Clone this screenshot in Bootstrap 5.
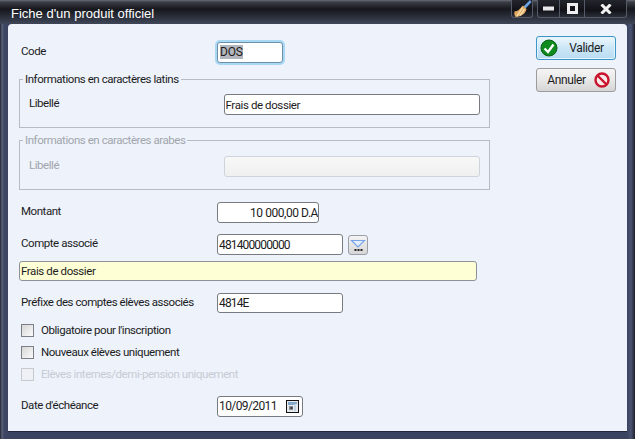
<!DOCTYPE html>
<html lang="fr">
<head>
<meta charset="utf-8">
<title>Fiche d'un produit officiel</title>
<link href="https://cdn.jsdelivr.net/npm/bootstrap@5.3.0/dist/css/bootstrap.min.css" rel="stylesheet">
<style>
html,body{margin:0;padding:0;background:#3c4560;overflow:hidden}
body{font-family:Roboto,"Liberation Sans",Arial,sans-serif;font-size:11.5px;letter-spacing:-.45px;color:#1c1c1c;line-height:14px}
.win{width:635px;height:439px;background:linear-gradient(90deg,#20242f 0,#59617a 2px,#3d4763 4px,#3a4360 8px,#3a4360 627px,#4a5371 631px,#1e222c 635px)}
.tbar{height:24px;background:linear-gradient(180deg,#6b6f79 0,#3c3e46 2px,#17181e 9px,#23262f 14px,#3f4658 24px)}
.tbar-title{color:#fff;font-family:"Liberation Sans",Arial,sans-serif;font-size:13px;letter-spacing:0;padding:6px 0 0 11px;line-height:16px}
.wbtns{padding-right:8px;height:18px}
.wb{height:18px;border:1px solid #555a68;border-top:0;background:linear-gradient(180deg,#23252c,#111218 60%,#2b2e38);color:#fff}
.wb-brush{width:22px;border-radius:0 0 3px 3px;margin-right:4px}
.wb-min{width:23px;border-radius:0 0 0 3px}
.wb-max{width:25px;border-left:0}
.wb-close{width:42px;border-left:0;border-radius:0 0 3px 0}
.client{width:619px;height:408px;margin-left:8px;background:#edf2fb;border-radius:4px 4px 0 0;border-bottom:1px solid #23283a}
.fcol{width:483px;padding:18px 0 0 11px}
.scol{width:91px;margin-left:auto;padding:12px 11px 0 0}
.frow{height:21px}
.frow-s{height:20px}
.frow-l{padding-left:2px}
.flab{width:196px;padding-bottom:3px}
.fld.form-control{height:21px;min-height:0;border:1px solid #777b80;border-radius:3px;padding:0 2px 0 1px;font-size:11.5px;letter-spacing:-.4px;line-height:19px;color:#1c1c1c;background:#fff;box-shadow:none;font-family:inherit}
.frow-s .fld.form-control{height:20px;line-height:18px}
.fld.fnum.form-control{font-size:12px;letter-spacing:-.85px}
.fld.w-mont.form-control{font-size:12px;letter-spacing:-.45px;text-align:right;padding-right:0}
.fld.fld-focus.form-control{padding-left:2px;border-color:#6e8fa8;box-shadow:0 0 0 2px #a8d8f4;font-size:12px;letter-spacing:-.25px}
.w-code{width:66px}
.w-mont{width:102px}
.w-comp{width:126px}
.w-lib{width:257px}
.sel{background:#b4b6bd}
.fld-dis.form-control{background:linear-gradient(180deg,#f8f8f8,#efefef);border-color:#cfd3da}
.fld-yellow.form-control{width:458px;height:20px;line-height:18px;background:#ffffd5;border-color:#8e9298;display:block}
.gbox{margin:0;border:1px solid #b8bcc2;width:471px;padding:0 9px 12px 9px;min-width:0}
.gbox legend{float:none;width:auto;font-size:11.5px;line-height:14px;margin:0 0 0 -6px;padding:0 2px;color:#1c1c1c}
.gbox-1{margin-top:9px;padding-top:8px}
.gbox-2{margin-top:5px;padding-top:9px;color:#a2a6ac}
.gbox-2 legend{color:#a2a6ac}
.gbox .flab{width:195px}
.m12{margin-top:12px}.m11{margin-top:11px}.m6{margin-top:6px}.m10{margin-top:10px}.m9{margin-top:9px}.m15{margin-top:15px}
.sqbtn{width:20px;height:20px;margin-left:5px;padding:0;border:1px solid #9a9ea6;border-radius:3px;background:linear-gradient(180deg,#f4f4f4,#d6d6d6)}
.sqbtn svg{display:block;margin:0 auto}
.date-wrap{width:86px;height:21px;border:1px solid #777b80;border-radius:3px;background:#fff;font-size:12px;letter-spacing:-.6px;line-height:19px;padding:0 3px 0 1px}
.date-ico{display:block;width:13px;height:13px}
.chk{height:13px;padding-left:2px}
.chk .form-check-input{width:13px;height:13px;margin:0 6px 0 0;border:1px solid #7c8086;border-radius:0;background:linear-gradient(135deg,#d6d6d6,#fbfbfb);float:none;opacity:1;flex:none}
.chk .form-check-label{opacity:1;color:#1c1c1c;padding:0 0 2px 1px}
.chk-dis .form-check-input{border-color:#c6c9ce;background:#eef0f5}
.chk-dis .form-check-label{color:#a2a6ac}
.abtn.btn{width:80px;height:24px;padding:0 0 0 3px;font-size:12px;letter-spacing:-.35px;line-height:22px;color:#1c1c1c;border-radius:3px;display:flex;align-items:center}
.abtn-ok.btn{background:linear-gradient(180deg,#eef7fd,#cbe6f6 50%,#b9dcf2);border:1px solid #3d95c8;box-shadow:inset 0 0 0 1px #e5f4fc}
.abtn-no.btn{background:linear-gradient(180deg,#f5f5f5,#e8e8e8 50%,#d5d5d5);border:1px solid #9c9c9c;margin-top:8px}
.abtn-txt{flex:1;text-align:center}
</style>
</head>
<body>
<div class="win d-flex flex-column">
  <div class="tbar d-flex justify-content-between align-items-start">
    <div class="tbar-title">Fiche d'un produit officiel</div>
    <div class="wbtns d-flex">
      <div class="wb wb-brush d-flex align-items-center justify-content-center">
        <svg width="19" height="17" viewBox="0 0 19 17"><path d="M17 0 L10.5 6.5 L12.5 8.5 L18.5 2Z" fill="#6ba3e4"/><path d="M10 5.5 L13.5 9 C13 13 9 16.5 2.5 17 C1.5 15 1 13.5 1.5 11.5 C5 11.5 7 8.5 10 5.5Z" fill="#e3ab62"/><path d="M9.5 7.5 C8 10 6.5 13 4 16 M11.5 9 C10.5 11 9 13.5 7 15.5" stroke="#f8e2b4" stroke-width="1.3" fill="none"/></svg>
      </div>
      <div class="wb wb-min d-flex align-items-center justify-content-center">
        <svg width="11" height="5" viewBox="0 0 11 5"><rect x="0" y="0.5" width="11" height="4" fill="#e8e8e8"/></svg>
      </div>
      <div class="wb wb-max d-flex align-items-center justify-content-center">
        <svg width="11" height="11" viewBox="0 0 11 11"><path d="M0 0H11V11H0ZM3 3V8H8V3Z" fill="#eee" fill-rule="evenodd"/></svg>
      </div>
      <div class="wb wb-close d-flex align-items-center justify-content-center">
        <svg width="12" height="10" viewBox="0 0 12 10"><path d="M1.5 0.5 L10.5 9.5 M10.5 0.5 L1.5 9.5" stroke="#f2f2f2" stroke-width="3"/></svg>
      </div>
    </div>
  </div>
  <div class="client d-flex">
    <div class="fcol">
      <div class="frow d-flex align-items-center frow-l">
        <div class="flab">Code</div>
        <div class="form-control fld fld-focus w-code"><span class="sel">DOS</span></div>
      </div>
      <fieldset class="gbox gbox-1">
        <legend>Informations en caractères latins</legend>
        <div class="frow d-flex align-items-center">
          <div class="flab">Libellé</div>
          <input class="form-control fld w-lib" value="Frais de dossier">
        </div>
      </fieldset>
      <fieldset class="gbox gbox-2">
        <legend>Informations en caractères arabes</legend>
        <div class="frow d-flex align-items-center">
          <div class="flab">Libellé</div>
          <input class="form-control fld fld-dis w-lib" disabled>
        </div>
      </fieldset>
      <div class="frow d-flex align-items-center frow-l m12">
        <div class="flab">Montant</div>
        <input class="form-control fld w-mont" value="10 000,00 D.A">
      </div>
      <div class="frow d-flex align-items-center frow-l m11">
        <div class="flab">Compte associé</div>
        <input class="form-control fld fnum w-comp" value="481400000000">
        <button class="btn sqbtn" type="button" aria-label="Rechercher">
          <svg width="16" height="16" viewBox="0 0 16 16"><path d="M1.5 3.5H14.5L8 10Z" fill="#e4eefc" stroke="#7aa4e8" stroke-width="1.2"/><rect x="4.5" y="12" width="2" height="2" fill="#222"/><rect x="7.5" y="12" width="2" height="2" fill="#222"/><rect x="10.5" y="12" width="2" height="2" fill="#222"/></svg>
        </button>
      </div>
      <input class="form-control fld fld-yellow m6" value="Frais de dossier">
      <div class="frow frow-s d-flex align-items-center frow-l m12">
        <div class="flab">Préfixe des comptes élèves associés</div>
        <input class="form-control fld fnum w-comp" value="4814E">
      </div>
      <div class="chk d-flex align-items-center m11">
        <input class="form-check-input" type="checkbox" id="c1">
        <label class="form-check-label" for="c1">Obligatoire pour l'inscription</label>
      </div>
      <div class="chk d-flex align-items-center m9">
        <input class="form-check-input" type="checkbox" id="c2">
        <label class="form-check-label" for="c2">Nouveaux élèves uniquement</label>
      </div>
      <div class="chk chk-dis d-flex align-items-center m9">
        <input class="form-check-input" type="checkbox" id="c3" disabled>
        <label class="form-check-label" for="c3">Elèves internes/demi-pension uniquement</label>
      </div>
      <div class="frow d-flex align-items-center frow-l m15">
        <div class="flab">Date d'échéance</div>
        <div class="date-wrap d-flex align-items-center justify-content-between">
          <span>10/09/2011</span>
          <svg class="date-ico" viewBox="0 0 13 13"><rect x="0.5" y="0.5" width="12" height="12" fill="#e6e9ec" stroke="#111"/><path d="M2 2H11V4L7 5H2Z" fill="#7fa8c9"/><path d="M3 6H7V10H3Z" fill="#8b9096"/><rect x="4.5" y="7" width="2" height="2" fill="#34383c"/><path d="M9 5.5V11" stroke="#b5cde0" stroke-width="1.5"/></svg>
        </div>
      </div>
    </div>
    <div class="scol">
      <button class="btn abtn abtn-ok" type="button">
        <svg width="18" height="18" viewBox="0 0 18 18"><circle cx="9" cy="9" r="8" fill="#0f8a1c" stroke="#0a5f14"/><path d="M4.5 9.5 L8 13 L13.5 5.5" stroke="#fff" stroke-width="2.4" fill="none"/></svg>
        <span class="abtn-txt">Valider</span>
      </button>
      <button class="btn abtn abtn-no" type="button">
        <span class="abtn-txt">Annuler</span>
        <svg width="18" height="18" viewBox="0 0 18 18" class="me-1"><circle cx="9" cy="9" r="6.5" fill="#fbeaea" stroke="#c8142c" stroke-width="2.4"/><path d="M4.5 4.5 L13.5 13.5" stroke="#c8142c" stroke-width="2.4"/></svg>
      </button>
    </div>
  </div>
</div>
</body>
</html>
